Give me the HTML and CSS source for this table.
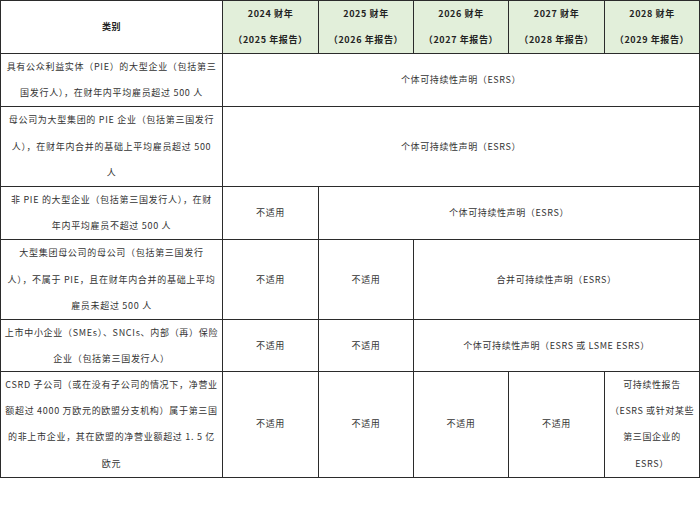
FILE: index.html
```html
<!DOCTYPE html>
<html lang="zh">
<head>
<meta charset="utf-8">
<link rel="stylesheet" href="styles.css">
</head>
<body>
<table class="grid">
  <colgroup>
    <col class="c-cat"><col class="c-y1"><col class="c-y"><col class="c-y"><col class="c-y1"><col class="c-y">
  </colgroup>
  <thead>
    <tr class="head">
      <th class="h-cat">类别</th>
      <th class="h-year">2024 财年<br>（2025 年报告）</th>
      <th class="h-year">2025 财年<br>（2026 年报告）</th>
      <th class="h-year">2026 财年<br>（2027 年报告）</th>
      <th class="h-year">2027 财年<br>（2028 年报告）</th>
      <th class="h-year">2028 财年<br>（2029 年报告）</th>
    </tr>
  </thead>
  <tbody>
    <tr>
      <td class="cat">具有公众利益实体（PIE）的大型企业（包括第三<br>国发行人），在财年内平均雇员超过 500 人</td>
      <td colspan="5">个体可持续性声明（ESRS）</td>
    </tr>
    <tr>
      <td class="cat">母公司为大型集团的 PIE 企业（包括第三国发行<br>人），在财年内合并的基础上平均雇员超过 500<br>人</td>
      <td colspan="5">个体可持续性声明（ESRS）</td>
    </tr>
    <tr>
      <td class="cat">非 PIE 的大型企业（包括第三国发行人），在财<br>年内平均雇员不超过 500 人</td>
      <td>不适用</td>
      <td colspan="4">个体可持续性声明（ESRS）</td>
    </tr>
    <tr>
      <td class="cat">大型集团母公司的母公司（包括第三国发行<br>人），不属于 PIE，且在财年内合并的基础上平均<br>雇员未超过 500 人</td>
      <td>不适用</td>
      <td>不适用</td>
      <td colspan="3">合并可持续性声明（ESRS）</td>
    </tr>
    <tr class="short">
      <td class="cat">上市中小企业（SMEs）、SNCIs、内部（再）保险<br>企业（包括第三国发行人）</td>
      <td>不适用</td>
      <td>不适用</td>
      <td colspan="3">个体可持续性声明（ESRS 或 LSME ESRS）</td>
    </tr>
    <tr>
      <td class="cat">CSRD 子公司（或在没有子公司的情况下，净营业<br>额超过 4000 万欧元的欧盟分支机构）属于第三国<br>的非上市企业，其在欧盟的净营业额超过 1. 5 亿<br>欧元</td>
      <td>不适用</td>
      <td>不适用</td>
      <td>不适用</td>
      <td>不适用</td>
      <td>可持续性报告<br>（ESRS 或针对某些<br>第三国企业的<br>ESRS）</td>
    </tr>
  </tbody>
</table>
</body>
</html>
```

FILE: styles.css
```css
html, body {
  margin: 0;
  padding: 0;
  background: #ffffff;
}

body {
  font-family: "Noto Sans CJK SC", "Liberation Sans", sans-serif;
  color: #333333;
}

.grid {
  border-collapse: collapse;
  table-layout: fixed;
  width: 699px;
  margin: 0;
}

.c-cat { width: 222px; }
.c-y1 { width: 96px; }
.c-y { width: 95px; }

.grid th,
.grid td {
  border: 1px solid #2b2b2b;
  padding: 0;
  text-align: center;
  vertical-align: middle;
  font-size: 9px;
  line-height: 26.2px;
  letter-spacing: 0.6px;
  white-space: nowrap;
  overflow: hidden;
}

.head th {
  line-height: 26px;
  font-weight: 700;
  color: #222222;
}

.h-cat {
  background: #ffffff;
}

.h-year {
  background: #e2efda;
}

.grid td {
  font-weight: 400;
}

.short td {
  line-height: 25.5px;
}

.grid td.cat {
  letter-spacing: 0.7px;
}
```
